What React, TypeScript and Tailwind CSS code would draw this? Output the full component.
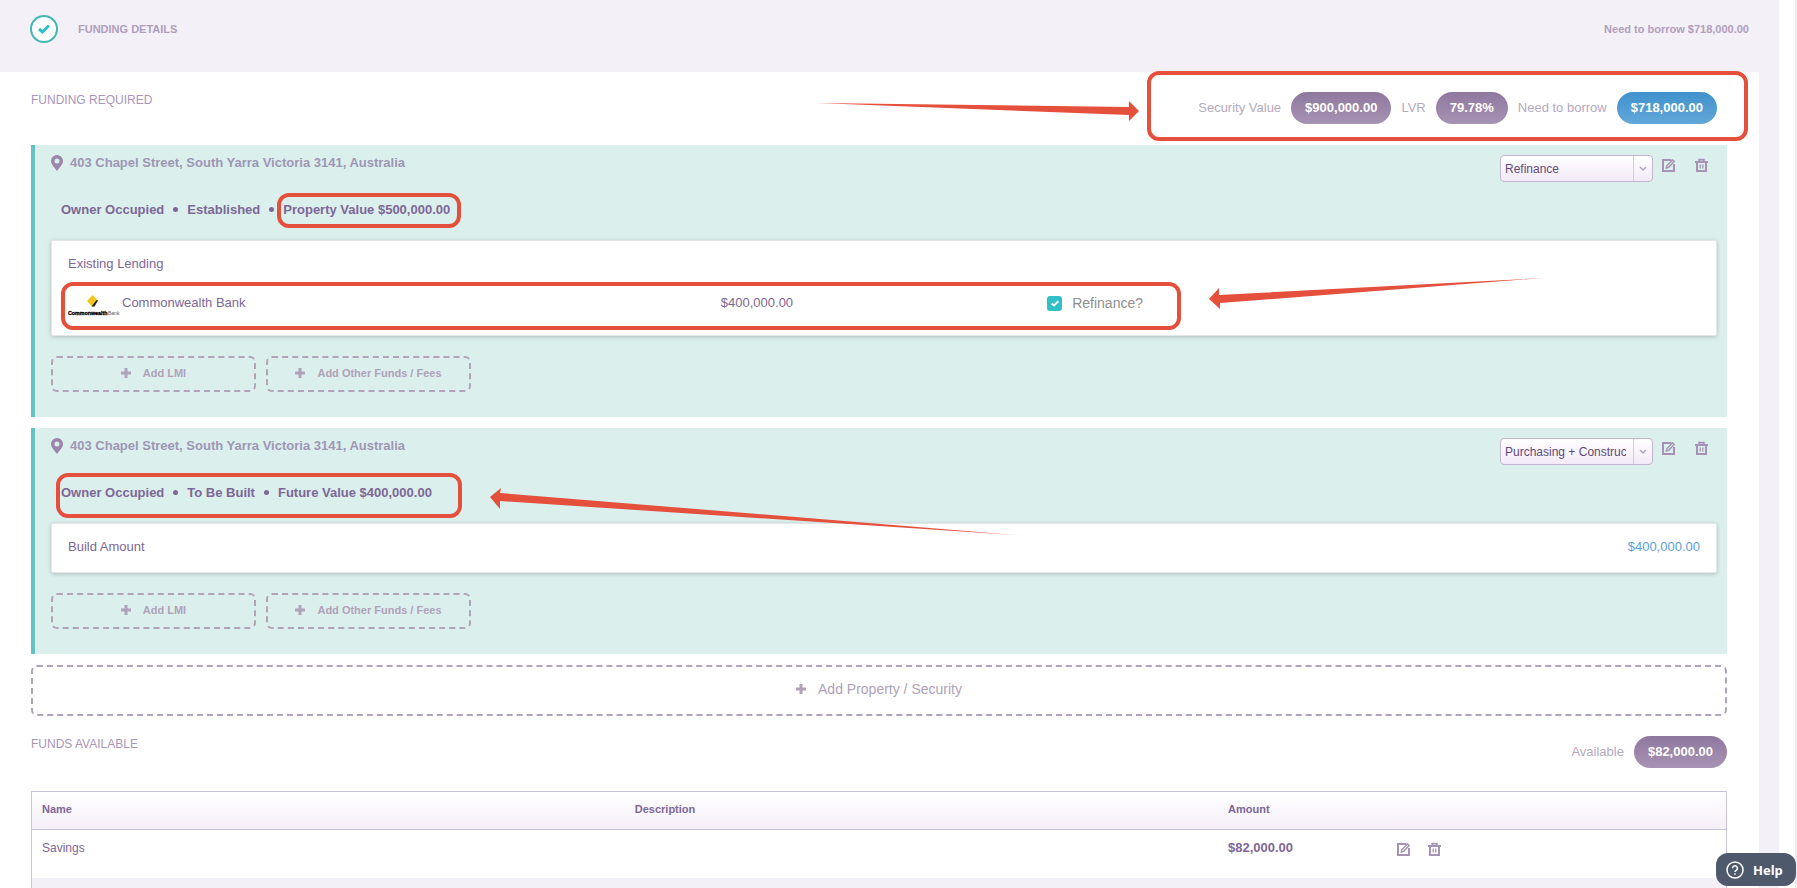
import type { ReactNode } from "react"

const iconClass = "h-[15px] w-[15px] fill-none stroke-[#a592b5]"

function EditIcon() {
  return (
    <svg viewBox="0 0 15 15" className={iconClass} strokeWidth="2" aria-hidden="true">
      <path d="M10.500 2H2v11h11V6" />
      <path d="M5.300 10 6 7.600 11.600 2 13.200 3.600 7.600 9.300Z" strokeWidth="1.400" />
    </svg>
  )
}

function TrashIcon() {
  return (
    <svg viewBox="0 0 15 15" className={iconClass} strokeWidth="2" aria-hidden="true">
      <path d="M3 4.500V13h9V4.500" />
      <path d="M1 4h13" />
      <path d="M5.200 3.500V1.600h4.600v1.900" strokeWidth="1.800" />
      <path d="M6.200 6.500v4M8.800 6.500v4" strokeWidth="1.300" />
    </svg>
  )
}

function PinIcon() {
  return (
    <svg viewBox="0 0 12 16" className="h-4 w-3 fill-[#9c84ab]" aria-hidden="true">
      <path fillRule="evenodd" d="M6 0a6 6 0 0 0-6 6c0 3.600 3.600 6.300 6 10 2.400-3.700 6-6.400 6-10a6 6 0 0 0-6-6Zm0 3.500a2.500 2.500 0 1 1 0 5 2.500 2.500 0 0 1 0-5Z" />
    </svg>
  )
}

function PlusIcon() {
  return (
    <svg viewBox="0 0 10 10" className="h-2.5 w-2.5 fill-none stroke-[#b0a2b9]" strokeWidth="3" aria-hidden="true">
      <path d="M5 0v10M0 5h10" />
    </svg>
  )
}

function BankLogo() {
  return (
    <svg viewBox="0 0 52 22" className="h-[22px] w-[52px]" role="img" aria-label="Commonwealth Bank">
      <path d="M24.500 0 30 5.500 25.500 12H24.500L19 6Z" fill="#f5c518" />
      <path d="M30 5.500 26.500 11.500h-3L28.500 5Z" fill="#222" />
      <text x="0" y="19.500" fontSize="5.300" fontWeight="900" fontFamily="Liberation Sans, sans-serif" fill="#000" stroke="#000" strokeWidth="0.300">
        Commonwealth
      </text>
      <text x="40" y="19.500" fontSize="5" fontFamily="Liberation Sans, sans-serif" fill="#555">
        Bank
      </text>
    </svg>
  )
}

function Pill({ children, blue = false }: { children: ReactNode; blue?: boolean }) {
  return (
    <span
      className={`flex h-8 items-center rounded-full bg-linear-to-b px-3.5 font-bold text-white ${
        blue ? "from-[#3f92cd] to-[#62a7d9]" : "from-[#8f789f] to-[#a793b3]"
      }`}
    >
      {children}
    </span>
  )
}

function RowActions() {
  return (
    <>
      <button type="button" aria-label="Edit">
        <EditIcon />
      </button>
      <button type="button" aria-label="Delete">
        <TrashIcon />
      </button>
    </>
  )
}

function AddButton({ children }: { children: ReactNode }) {
  return (
    <button
      type="button"
      className="flex h-9 w-[205px] items-center justify-center gap-3 rounded-md border-2 border-dashed border-[#b0a4b8] pb-0.5 text-[11px] font-bold text-[#b0a2b9]"
    >
      <PlusIcon />
      {children}
    </button>
  )
}

type SecurityProps = {
  id: string
  address: string
  details: string[]
  purpose: string
  children: ReactNode
}

function Security({ id, address, details, purpose, children }: SecurityProps) {
  return (
    <section className="border-l-4 border-[#66c2c2] bg-[#dbefed] pr-2.5 pb-[25px] pl-4">
      <div className="flex h-12 items-start justify-between pt-2.5">
        <h3 className="flex items-center gap-[7px] font-bold text-[#9d97b4]">
          <PinIcon />
          {address}
        </h3>
        <div className="flex items-start">
          <div className="relative">
            <label htmlFor={id} className="sr-only">
              Purpose
            </label>
            <select
              id={id}
              className="h-[27px] w-[153px] appearance-none rounded-sm border border-[#c4b5cf] bg-linear-to-b from-white to-[#f3eaf7] pr-[26px] pl-1 text-[12px] text-[#5f4a78]"
            >
              <option>{purpose}</option>
            </select>
            <span className="pointer-events-none absolute inset-y-px right-px flex w-[19px] items-center justify-center border-l border-[#d5cbdc]">
              <svg viewBox="0 0 8 6" className="h-1.5 w-2 fill-none stroke-[#b3a3bf]" strokeWidth="1.500" aria-hidden="true">
                <path d="m1 1 3 3 3-3" />
              </svg>
            </span>
          </div>
          <div className="flex gap-[18px] pt-[3px] pr-2 pl-2">
            <RowActions />
          </div>
        </div>
      </div>

      <ul className="flex h-[47px] items-center gap-[9px] pb-3.5 pl-2.5 font-bold text-[#7d6796]">
        {details.map((detail, i) => (
          <li key={detail} className="flex items-center gap-[9px]">
            {i > 0 && <span className="h-[5px] w-[5px] rounded-full bg-[#7d6796]" />}
            {detail}
          </li>
        ))}
      </ul>

      <div className="rounded-xs border border-[#e3e7e8] bg-white px-4 text-[#7d6796] shadow-[0_1px_4px_rgba(0,0,0,0.2)]">{children}</div>

      <div className="flex gap-2.5 pt-5">
        <AddButton>Add LMI</AddButton>
        <AddButton>Add Other Funds / Fees</AddButton>
      </div>
    </section>
  )
}

function Annotations() {
  return (
    <div className="pointer-events-none absolute inset-0">
      <div className="absolute top-[71px] left-[1147px] h-[70px] w-[601px] rounded-xl border-4 border-[#e5503c]" />
      <div className="absolute top-[193px] left-[277px] h-[35px] w-[184px] rounded-xl border-4 border-[#e5503c]" />
      <div className="absolute top-[282px] left-[61px] h-[48px] w-[1120px] rounded-xl border-4 border-[#e5503c]" />
      <div className="absolute top-[473px] left-[56px] h-[45px] w-[406px] rounded-xl border-4 border-[#e5503c]" />
      <svg className="absolute inset-0 h-full w-full fill-[#e5503c]" aria-hidden="true">
        <path d="M817 103 1129 107V101L1139 111 1129 121V115Z" />
        <path d="M1543 278 1219 295V288L1209 299 1220 309V303Z" />
        <path d="M1015 535 500 493 501 488 490 497 500 509V501Z" />
      </svg>
    </div>
  )
}

export default function App() {
  return (
    <div className="relative h-screen overflow-hidden border-r-2 border-[#ececec] bg-white pr-4 font-['Liberation_Sans',Arial,sans-serif] text-[13px] leading-4">
      <div className="min-h-full bg-[#f3f0f7]">
        <header className="flex h-[72px] items-start justify-between pt-[15px] pr-[30px] pl-[30px] text-[11px] font-bold text-[#b09fbd]">
          <div className="flex items-center gap-5">
            <span className="flex h-7 w-7 items-center justify-center rounded-full border-2 border-[#41b8b4] bg-white">
              <svg viewBox="0 0 12 10" className="h-2.5 w-3 fill-none stroke-[#2fc0c3]" strokeWidth="3" aria-hidden="true">
                <path d="m1 5 3.500 3L11 1.500" />
              </svg>
            </span>
            <h1>FUNDING DETAILS</h1>
          </div>
          <p className="pt-1.5">Need to borrow $718,000.00</p>
        </header>

        <main className="mr-5 bg-white pr-8 pl-[31px]">
          <div className="flex h-[73px] items-start justify-between pt-5">
            <h2 className="text-[12px] text-[#a995b8]">FUNDING REQUIRED</h2>
            <div className="flex items-center gap-2.5 pr-2.5 text-[#b5a9c0]">
              <span>Security Value</span>
              <Pill>$900,000.00</Pill>
              <span>LVR</span>
              <Pill>79.78%</Pill>
              <span>Need to borrow</span>
              <Pill blue>$718,000.00</Pill>
            </div>
          </div>

          <div className="flex flex-col gap-[11px]">
            <Security
              id="purpose-1"
              address="403 Chapel Street, South Yarra Victoria 3141, Australia"
              details={["Owner Occupied", "Established", "Property Value $500,000.00"]}
              purpose="Refinance"
            >
              <p className="pt-[15px]">Existing Lending</p>
              <div className="flex h-[63px] items-start pt-[23px]">
                <div className="flex w-[40%] gap-0.5">
                  <BankLogo />
                  <span>Commonwealth Bank</span>
                </div>
                <span className="w-[20%]">$400,000.00</span>
                <label className="flex items-center gap-2.5 text-[14px] text-[#8f8f8f]">
                  <span className="relative flex h-[15px] w-[15px]">
                    <input type="checkbox" defaultChecked className="h-[15px] w-[15px] appearance-none rounded-[3px] bg-[#31c0c8]" />
                    <svg viewBox="0 0 12 10" className="pointer-events-none absolute top-1 left-1 h-[7px] w-2 fill-none stroke-white" strokeWidth="3" aria-hidden="true">
                      <path d="m1 5 3.500 3L11 1.500" />
                    </svg>
                  </span>
                  Refinance?
                </label>
              </div>
            </Security>

            <Security
              id="purpose-2"
              address="403 Chapel Street, South Yarra Victoria 3141, Australia"
              details={["Owner Occupied", "To Be Built", "Future Value $400,000.00"]}
              purpose="Purchasing + Construction"
            >
              <div className="flex h-[48px] items-center justify-between pb-0.5">
                <span>Build Amount</span>
                <span className="text-[#5d9fd6]">$400,000.00</span>
              </div>
            </Security>

            <button
              type="button"
              className="flex h-[51px] w-full items-center justify-center gap-3 rounded-md border-2 border-dashed border-[#b0a4b8] pb-1 text-[14px] text-[#b0a2b9]"
            >
              <PlusIcon />
              Add Property / Security
            </button>
          </div>

          <div className="flex h-[75px] items-start justify-between pt-5">
            <h2 className="text-[12px] text-[#a995b8]">FUNDS AVAILABLE</h2>
            <div className="flex items-center gap-2.5 text-[#b5a9c0]">
              <span>Available</span>
              <Pill>$82,000.00</Pill>
            </div>
          </div>

          <table className="w-full table-fixed border-x border-t border-[#cbc3d8] text-left text-[#7d6796]">
            <thead>
              <tr className="h-[38px] border-b border-[#cbc3d8] bg-linear-to-b from-white to-[#f5eff9] text-[11px]">
                <th className="w-[35%] px-2.5 pb-1">Name</th>
                <th className="w-[35%] px-2.5 pb-1">Description</th>
                <th className="w-[10%] px-2.5 pb-1">Amount</th>
                <th className="w-[20%]" aria-label="Actions" />
              </tr>
            </thead>
            <tbody>
              <tr className="h-12">
                <td className="px-2.5 pb-3 text-[12px]">Savings</td>
                <td />
                <td className="px-2.5 pb-3 font-bold">$82,000.00</td>
                <td>
                  <div className="flex gap-4 pb-2 pl-2">
                    <RowActions />
                  </div>
                </td>
              </tr>
              <tr className="h-12 bg-[#f3f0f7]">
                <td colSpan={4} />
              </tr>
            </tbody>
          </table>
        </main>
      </div>

      <Annotations />

      <button
        type="button"
        className="fixed right-px bottom-0.5 flex h-[33px] w-20 items-center gap-[9px] rounded-xl bg-[#4e596b] pl-2.5 font-['Noto_Sans',sans-serif] text-[13px] font-bold text-white"
      >
        <svg viewBox="0 0 18 18" className="h-[18px] w-[18px] fill-none stroke-white" strokeWidth="1.500" aria-hidden="true">
          <circle cx="9" cy="9" r="8" />
          <path d="M6.600 7.200a2.400 2.400 0 1 1 3.600 2.100c-.800.500-1.200.800-1.200 1.700M9 12.300v1.500" />
        </svg>
        Help
      </button>
    </div>
  )
}
